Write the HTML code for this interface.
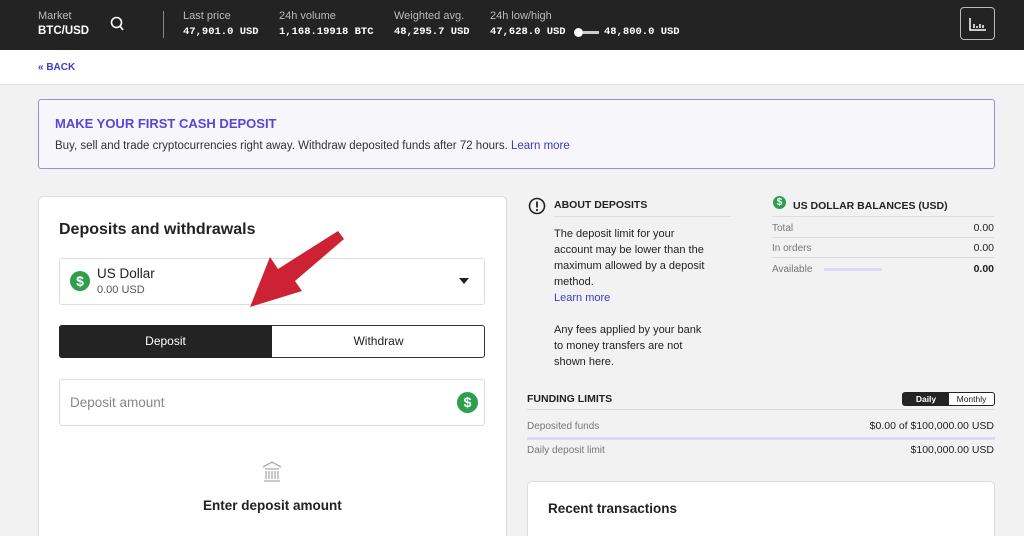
<!DOCTYPE html>
<html><head><meta charset="utf-8"><style>
*{margin:0;padding:0;box-sizing:border-box}
html,body{width:1024px;height:536px;overflow:hidden}
body{background:#f2f2f2;font-family:"Liberation Sans",sans-serif;color:#222;position:relative}
.a{position:absolute;white-space:nowrap}
.hd{position:absolute;left:0;top:0;width:1024px;height:50px;background:#232323}
.hl{font-family:"Liberation Sans Narrow","Liberation Sans",sans-serif;font-size:11px;color:#bbb}
.hv{font-family:"Liberation Mono",monospace;font-size:10.5px;color:#fff;font-weight:bold}
.sep{border-bottom:1px solid #e2e2e2}
.s{font-size:11px;color:#222}
.g{font-size:10px;color:#777}
.r{right:30px;text-align:right}
.ln{position:absolute;height:2px;background:#e0e0e0}
.dol{position:absolute;border-radius:50%;background:#2e9e4f;color:#fff;font-weight:bold;text-align:center}
</style></head><body>
<div class="hd"></div>
<div class="a hl" style="left:38px;top:10px">Market</div>
<div class="a" style="left:38px;top:25px;color:#fff;font-size:11.5px;font-weight:bold">BTC/USD</div>
<svg class="a" style="left:110px;top:16px" width="14" height="16"><circle cx="6.5" cy="6.5" r="5" fill="none" stroke="#fff" stroke-width="1.6"/><line x1="10" y1="10" x2="13" y2="14" stroke="#fff" stroke-width="1.6"/></svg>
<div class="a" style="left:163px;top:11px;width:1px;height:27px;background:#888"></div>
<div class="a hl" style="left:183px;top:10px">Last price</div><div class="a hv" style="left:183px;top:26px">47,901.0 USD</div>
<div class="a hl" style="left:279px;top:10px">24h volume</div><div class="a hv" style="left:279px;top:26px">1,168.19918 BTC</div>
<div class="a hl" style="left:394px;top:10px">Weighted avg.</div><div class="a hv" style="left:394px;top:26px">48,295.7 USD</div>
<div class="a hl" style="left:490px;top:10px">24h low/high</div><div class="a hv" style="left:490px;top:26px">47,628.0 USD</div>
<div class="a" style="left:574px;top:28px;width:9px;height:9px;border-radius:50%;background:#fff"></div>
<div class="a" style="left:583px;top:31px;width:16px;height:3px;background:#ccc"></div>
<div class="a hv" style="left:604px;top:26px">48,800.0 USD</div>
<div class="a" style="left:960px;top:7px;width:35px;height:33px;border:1.5px solid #bbb;border-radius:4px"></div>
<svg class="a" style="left:968px;top:15px" width="20" height="18"><path d="M2 3V15H18M6 9V13M9 11V13M12 9V13M15 10V13" stroke="#fff" stroke-width="1.5" fill="none"/></svg>
<div class="a sep" style="left:0;top:50px;width:1024px;height:35px;background:#fff"></div>
<div class="a" style="left:38px;top:62px;font-size:10px;font-weight:bold;color:#3b3bc4">« BACK</div>
<div class="a" style="left:38px;top:99px;width:957px;height:70px;background:#f6f6fb;border:1.5px solid #9b8be8;border-radius:3px"></div>
<div class="a" style="left:55px;top:116px;font-size:13px;font-weight:bold;color:#5b45d6">MAKE YOUR FIRST CASH DEPOSIT</div>
<div class="a" style="left:55px;top:140px;font-size:11.5px;color:#333">Buy, sell and trade cryptocurrencies right away. Withdraw deposited funds after 72 hours. <span style="color:#3b3bc4">Learn more</span></div>
<div class="a" style="left:38px;top:196px;width:469px;height:360px;background:#fff;border:1px solid #ddd;border-radius:5px"></div>
<div class="a" style="left:59px;top:221px;font-size:16px;font-weight:bold">Deposits and withdrawals</div>
<div class="a" style="left:59px;top:258px;width:426px;height:47px;border:1px solid #ddd;border-radius:3px"></div>
<div class="dol" style="left:70px;top:271px;width:20px;height:20px;font-size:14px;line-height:20px">$</div>
<div class="a" style="left:97px;top:266px;font-size:13.5px">US Dollar</div>
<div class="a" style="left:97px;top:284px;font-size:11px;color:#555">0.00 USD</div>
<svg class="a" style="left:459px;top:278px" width="10" height="6"><path d="M0 0H10L5 6Z" fill="#222"/></svg>
<div class="a" style="left:59px;top:325px;width:426px;height:33px;border:1.5px solid #333;border-radius:3px;background:#fff"></div>
<div class="a" style="left:59px;top:325px;width:213px;height:33px;background:#232323;border-radius:3px 0 0 3px;color:#fff;font-size:12px;text-align:center;line-height:33px">Deposit</div>
<div class="a" style="left:272px;top:325px;width:213px;height:33px;font-size:12px;text-align:center;line-height:33px">Withdraw</div>
<div class="a" style="left:59px;top:379px;width:426px;height:47px;border:1px solid #ddd;border-radius:3px"></div>
<div class="a" style="left:70px;top:395px;font-size:13.5px;color:#888">Deposit amount</div>
<div class="dol" style="left:457px;top:392px;width:21px;height:21px;font-size:14px;line-height:21px">$</div>
<svg class="a" style="left:262px;top:461px" width="20" height="22"><path d="M1 6L10 1L19 6M3 8H17M4 10V18M7 10V18M10 10V18M13 10V18M16 10V18M2 20H18" stroke="#aaa" stroke-width="1.3" fill="none"/></svg>
<div class="a" style="left:203px;top:498px;font-size:13.5px;font-weight:bold;color:#222">Enter deposit amount</div>
<svg class="a" style="left:240px;top:225px" width="110" height="90"><path d="M98 6L104 14L55 56L62 66L10 82L30 32L38 44Z" fill="#cc2233"/></svg>
<svg class="a" style="left:528px;top:197px" width="18" height="18"><circle cx="9" cy="9" r="7.5" fill="none" stroke="#222" stroke-width="1.6"/><path d="M9 4.5V10.5" stroke="#222" stroke-width="1.8"/><circle cx="9" cy="13" r="1.1" fill="#222"/></svg>
<div class="a" style="left:554px;top:199px;font-size:10.5px;font-weight:bold">ABOUT DEPOSITS</div>
<div class="ln" style="left:553px;top:216px;width:178px;height:1px;background:#ddd"></div>
<div class="a s" style="left:554px;top:226px;line-height:16px">The deposit limit for your<br>account may be lower than the<br>maximum allowed by a deposit<br>method.<br><span style="color:#3b3bc4">Learn more</span><br><br>Any fees applied by your bank<br>to money transfers are not<br>shown here.</div>
<div class="dol" style="left:773px;top:196px;width:13px;height:13px;font-size:10px;line-height:13px">$</div>
<div class="a" style="left:793px;top:200px;font-size:10.5px;font-weight:bold">US DOLLAR BALANCES (USD)</div>
<div class="ln" style="left:772px;top:216px;width:222px;height:1px;background:#ddd"></div>
<div class="a g" style="left:772px;top:223px">Total</div><div class="a s r" style="top:222px;font-size:10.5px">0.00</div>
<div class="ln" style="left:772px;top:237px;width:222px;height:1px;background:#ddd"></div>
<div class="a g" style="left:772px;top:243px">In orders</div><div class="a s r" style="top:242px;font-size:10.5px">0.00</div>
<div class="ln" style="left:772px;top:257px;width:222px;height:1px;background:#ddd"></div>
<div class="a g" style="left:772px;top:264px">Available</div><div class="a" style="left:824px;top:268px;width:58px;height:3px;background:#dcd8f6"></div><div class="a s r" style="top:263px;font-size:10.5px;font-weight:bold">0.00</div>
<div class="a" style="left:527px;top:393px;font-size:10.5px;font-weight:bold">FUNDING LIMITS</div>
<div class="a" style="left:902px;top:392px;width:93px;height:14px;border:1px solid #222;border-radius:3px;background:#fff;font-size:8.5px"><span style="display:inline-block;width:46px;height:12px;background:#232323;color:#fff;text-align:center;line-height:12px;font-weight:bold">Daily</span><span style="display:inline-block;width:45px;text-align:center;line-height:12px">Monthly</span></div>
<div class="ln" style="left:527px;top:409px;width:468px;height:1px;background:#ddd"></div>
<div class="a g" style="left:527px;top:421px">Deposited funds</div><div class="a s r" style="top:420px;font-size:10.5px">$0.00 of $100,000.00 USD</div>
<div class="a" style="left:527px;top:437px;width:468px;height:3px;background:#dcd8f6"></div>
<div class="a g" style="left:527px;top:445px">Daily deposit limit</div><div class="a s r" style="top:444px;font-size:10.5px">$100,000.00 USD</div>
<div class="a" style="left:527px;top:481px;width:468px;height:80px;background:#fff;border:1px solid #ddd;border-radius:5px"></div>
<div class="a" style="left:548px;top:501px;font-size:13.5px;font-weight:bold">Recent transactions</div>
</body></html>
